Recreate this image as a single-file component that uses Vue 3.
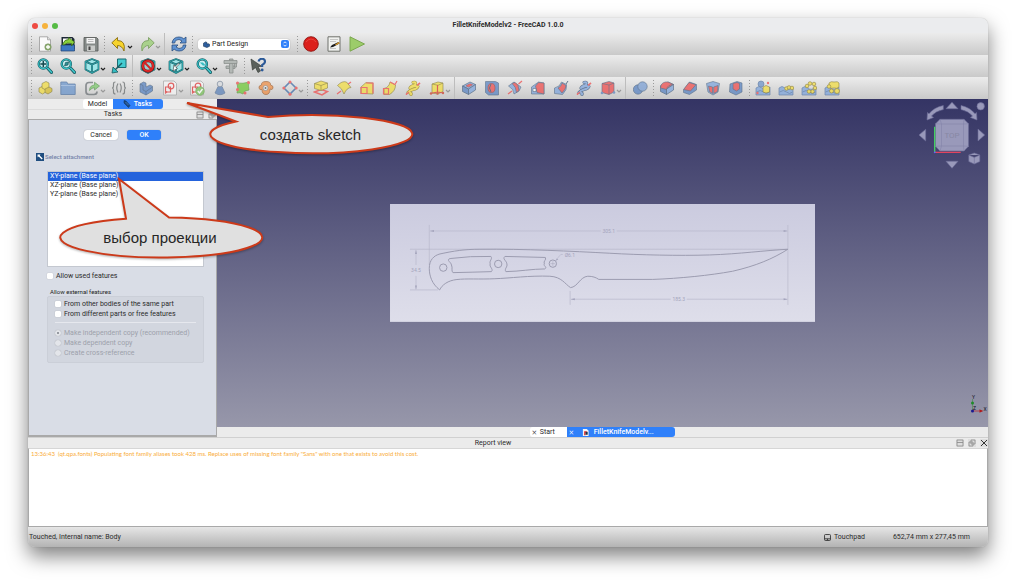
<script setup>
import { ref } from 'vue'

const cube = (top, left, right) =>
  `<g stroke-width=".7" stroke-linejoin="round"><path d="M1.500 6 9 2l5.500 2.500-7 4.500z" fill="${top}"/><path d="M1.500 6 7.500 9v5.500l-6-3z" fill="${left}"/><path d="M7.500 9l7-4.500V10l-7 4.500z" fill="${right}"/></g>`
const Y = '#f2dd45', YD = '#d9bf2e', B = '#7fa5dc', BD = '#5a84c2', R = '#ee4f4f'
const yel = (s) => `<g stroke="#6f641c" stroke-width=".6" stroke-linejoin="round">${s}</g>`
const blu = (s) => `<g stroke="#36506f" stroke-width=".6" stroke-linejoin="round">${s}</g>`
const lens = (s) =>
  `<path d="M10 9.500l4.500 4.800" stroke="#1b5a60" stroke-width="3.200" stroke-linecap="round"/><path d="M10 9.500l4.500 4.800" stroke="#3fc7cc" stroke-width="1.600" stroke-linecap="round"/><circle cx="6.300" cy="6" r="4.600" fill="#c9eef0" stroke="#1b5a60" stroke-width="2.400"/><circle cx="6.300" cy="6" r="4.600" fill="none" stroke="#35bcc2" stroke-width="1.300"/>${s}`
const tealCube = (s) =>
  `<g fill="#9fe6e8" stroke="#1b5a60" stroke-width="1.700" stroke-linejoin="round"><path d="M8 1l6.500 2.600v8L8 15l-6.500-3.400v-8z"/><path d="M1.500 3.600L8 6.400l6.500-2.800M8 6.400V15" fill="none"/></g><path d="M1.500 3.600L8 6.400l6.500-2.800M8 6.400V15M8 1l6.500 2.600v8L8 15l-6.500-3.400v-8z" fill="none" stroke="#35bcc2" stroke-width=".7"/>${s}`
const sketch =
  `<path d="M1.500 1h10.500l2.500 2.500V15h-13z" fill="#f5f5f5" stroke="#9a9a9a" stroke-width=".8"/><g fill="none" stroke="#e03a3a" stroke-width="1.200"><path d="M3.500 7h5v5h-5z"/><circle cx="9" cy="6" r="2.800"/><path d="M3 13.500l2-2"/></g>`
const land = (s) =>
  `<path d="M1 8q3-3 6 0t8-1v8H1z" fill="${B}" stroke="#4d6f9e" stroke-width=".7"/><path d="M1.500 12q4-3 7 0t6 0" stroke="#5a7db0" fill="none"/>${s}`
const dot = (x, y, r = 1.8) => `<circle cx="${x}" cy="${y}" r="${r}" fill="${Y}" stroke="#85751b" stroke-width=".7"/>`
const helix = (c, d) =>
  `<path d="M1 14.500L15 3" stroke="${R}" stroke-width="1.300"/><g fill="none" stroke-linecap="round" stroke-linejoin="round"><path d="M8 2.500q4-1 2 2.500-4 1-5 3 5-3 8-1.500-1 2.500-5 3-3.500 1-5 3 4 0 3 2" stroke="${d}" stroke-width="3"/><path d="M8 2.500q4-1 2 2.500-4 1-5 3 5-3 8-1.500-1 2.500-5 3-3.500 1-5 3 4 0 3 2" stroke="${c}" stroke-width="2"/></g><path d="M1 14.500l3-2.500M12 5.500l3-2.500" stroke="${R}" stroke-width="1.300"/>`

const art = {
  new: `<path d="M2.500 .8h8l3 3v11.400h-11z" fill="#fafafa" stroke="#999" stroke-width=".8"/><path d="M10.500 .8v3h3" fill="#ddd" stroke="#999" stroke-width=".7"/><circle cx="11" cy="11" r="3.200" fill="#8fb072" stroke="#718c5a" stroke-width=".6"/><path d="M11 9v4M9 11h4" stroke="#fff" stroke-width="1.300"/>`,
  open: `<path d="M1.500 1h11l2 2v10h-13z" fill="#1e2a36"/><path d="M3 2.500h9v5H3z" fill="#fff"/><path d="M1 9h13.500v6H1z" fill="#3e78c2" stroke="#1d3f70" stroke-width=".7"/><path d="M2.500 8.500q2-5.500 6-5V1.500L14.500 6l-3 4v-2.500Q7 6 4 9z" fill="#8bd13c" stroke="#33661b" stroke-width=".7"/>`,
  save: `<path d="M1 1.500h12.500l1.500 1.500v12H1z" fill="#858a88" stroke="#5c605e" stroke-width=".9"/><path d="M3.500 2h8.500v5.500H3.500z" fill="#f3f3f3"/><path d="M5 3.500h5.500M5 5.500h5.500" stroke="#aaa" stroke-width=".8"/><path d="M4 9.500h8V15H4z" fill="#c9cbc9"/><path d="M5.500 10.500h2v3.500h-2z" fill="#444"/>`,
  undo: `<path d="M.8 6.800L6.500 1.500v3Q15 4.500 13 15q-2-5.500-6.500-5.500v3z" fill="#f6d32d" stroke="#8a6d10" stroke-width=".9" stroke-linejoin="round"/>`,
  redo: `<path d="M15.200 6.800L9.500 1.500v3Q1 4.500 3 15q2-5.500 6.500-5.500v3z" fill="#a9d18c" stroke="#7fa266" stroke-width=".9" stroke-linejoin="round"/>`,
  refresh: `<g fill="#5f92d2" stroke="#2a4f80" stroke-width=".8" stroke-linejoin="round"><path d="M1 7q1-6 7-6 3 0 4.800 1.800L15 1v6H9l2-2Q8 2.500 5.500 4 4 5 3.700 7z"/><path d="M15 9q-1 6-7 6-3 0-4.800-1.800L1 15V9h6l-2 2q3 2.500 5.500 1 1.500-1 1.800-3z"/></g>`,
  rec: `<circle cx="8" cy="8" r="7.300" fill="#dc1f1b" stroke="#8f1411" stroke-width=".9"/><path d="M3 6q5-6 10 0" stroke="#ef6a60" stroke-width="1" fill="none" opacity=".5"/>`,
  edit: `<path d="M2 .8h12v14.400H2z" fill="#f1f2ef" stroke="#6f716c" stroke-width="1"/><path d="M4 3.500h8M4 5.500h6M4 12.500h6" stroke="#b5b5b5" stroke-width=".7"/><path d="M4 11.500l2-2.500 6.500-3 1 1.500-6.500 3.500z" fill="#1d1d1d"/><path d="M9 8.500l4-2.500.8 1.300-3.800 2z" fill="#d99a2b"/>`,
  play: `<path d="M1 .8L15.500 8 1 15.200z" fill="#9ccc6a" stroke="#77a34b" stroke-width=".9" stroke-linejoin="round"/>`,
  fitall: lens(`<path d="M6.300 3v6M3.300 6h6" stroke="#14484d" stroke-width="1.500"/>`),
  fitsel: lens(`<path d="M4.500 8l1-3.500 3-.5-.5 3z" fill="#2d8f95" stroke="#14484d" stroke-width=".6"/>`),
  cube: tealCube(''),
  align: `<path d="M6.500 1h8.500v8.500H6.500z" fill="#45ccd1" stroke="#1b6a70" stroke-width="1"/><path d="M11 5l-7 7" stroke="#1b5a60" stroke-width="1.500"/><path d="M1 15l1-6 5 5z" fill="#35bcc2" stroke="#1b5a60" stroke-width=".8"/>`,
  block: tealCube(`<circle cx="8" cy="8" r="5.200" fill="#9ccfd1" stroke="#7d1010" stroke-width="3"/><circle cx="8" cy="8" r="5.200" fill="none" stroke="#e02a2a" stroke-width="1.800"/><path d="M4.300 4.300l7.400 7.400" stroke="#d42424" stroke-width="2"/>`),
  box: tealCube(`<path d="M5 13l1-6 1 1.500L10.500 5l1 1-3.500 3.500 1.500 1z" fill="#fff" stroke="#333" stroke-width=".6"/>`),
  zoom: lens(`<path d="M3.800 4.500l3 3h3l-3-3z" fill="#35bcc2"/>`),
  caliper: `<g fill="#b3b8b5" stroke="#8c918e" stroke-width=".8"><path d="M3 8h9v2.500H3z"/><path d="M11.500 4v5h2V3z"/><path d="M6.500 1h3.500v14H6.500z"/><path d="M1 2.500h13v3H1z"/></g>`,
  whats: `<path d="M1 1l1.500 11 3-2.500 2.500 5 2.500-1.500-2.500-4.500h4z" fill="#5a605c" stroke="#3e423e" stroke-width=".7"/><path d="M8.500 3.500q.5-2.700 3.500-2.700T15 3.500q0 2-2.800 3.500v2" fill="none" stroke="#2c5a98" stroke-width="2.100"/><circle cx="12.200" cy="12" r="1.400" fill="#2c5a98"/>`,
  part: yel(`<path d="M2 8l4-2 3.500 1.500v4L5.500 14 2 12z" fill="${Y}"/><path d="M5 3.500L9 1.500l3 1.500v5l-3 2-4-2z" fill="${Y}"/><path d="M8 9l4-2 3 1.500v3L11 14l-3-1.500z" fill="${YD}"/>`),
  folder: `<path d="M.8 2h6l1 2h7.400v10.500H.8z" fill="#6b95cb" stroke="#42689b" stroke-width=".8"/><path d="M1 5.500h14" stroke="#a8c3e6" stroke-width=".7"/>`,
  link: `<path d="M9 2.500H5q-3 0-3 3v6q0 3 3 3h5q3 0 3-3" fill="none" stroke="#6e7478" stroke-width="1.700"/><path d="M5.500 10.500q0-5 5-5.500V2.300L15.500 6l-5 4V7.700Q8 7.500 5.500 10.500z" fill="#7cc96b" stroke="#4c8743" stroke-width=".7"/>`,
  braces: `<g fill="none" stroke="#6b6f70" stroke-width="1.200"><path d="M4.500 2q-2 0-2 2v2q0 2-1.500 2 1.500 0 1.500 2v2q0 2 2 2M11.500 2q2 0 2 2v2q0 2 1.500 2-1.500 0-1.500 2v2q0 2-2 2"/><path d="M7 3.500Q4.500 8 7 12.500M9 3.500q2.500 4.500 0 9"/></g>`,
  body: blu(`<path d="M2 4l3.500-2L8 3v4l4-2 2.500 1.200V11L8 15l-6-3z" fill="${BD}"/><path d="M2 4l3 1.500v4.500L8 11.500 14.500 7M8 11.500V15" fill="none"/>`),
  sketch,
  validate: sketch + `<circle cx="11" cy="11" r="4.300" fill="#7cc25e" stroke="#579a3d" stroke-width=".6"/><path d="M8.800 11l1.700 2 3-4" fill="none" stroke="#fff" stroke-width="1.400"/>`,
  check: `<path d="M6 6.500h4l3 6.500q-5 3.500-10 0z" fill="#5d83b9" stroke="#4a678f" stroke-width=".7"/><circle cx="8" cy="4" r="2.800" fill="#d7dbe0" stroke="#6b7a8f" stroke-width=".8"/>`,
  map: `<path d="M2 3q6 1 12-1-1 4 0 8l-4 1-2 3q-3-2-6-1 1.500-5 0-10z" fill="#6fc838" stroke="#4f8e2c" stroke-width=".7"/><g fill="${R}"><circle cx="2.500" cy="3" r="1.500"/><circle cx="13.500" cy="2.500" r="1.500"/><circle cx="2.500" cy="9.500" r="1.500"/><circle cx="10" cy="13" r="1.500"/></g>`,
  sheep: `<path d="M3.500 5Q3 1.500 8 1.500T12.500 5q3 .5 2.500 3t-3 1q0 5.500-4 5.500T4 9.500Q1.500 10.500 1 8t2.500-3z" fill="#ed8f48" stroke="#9b5a2c" stroke-width=".8"/><circle cx="7.500" cy="8" r="2.500" fill="#eee" stroke="#777" stroke-width=".7"/><circle cx="7.500" cy="8" r="1" fill="#555"/>`,
  datum: `<path d="M8 2L14 8 8 14 2 8z" fill="none" stroke="#426fa8" stroke-width="1.600"/><g fill="${R}"><circle cx="8" cy="1.900" r="1.500"/><circle cx="14.200" cy="8" r="1.500"/><circle cx="8" cy="14.200" r="1.500"/><circle cx="1.800" cy="8" r="1.500"/></g>`,
  pad: `<path d="M1.500 12l6.500-2.500 6.500 2L9 15z" fill="none" stroke="${R}" stroke-width="1.500"/>` + yel(`<path d="M1.500 3.500L8 1l6.500 2v5L8 10.500l-6.500-2z" fill="${Y}"/><path d="M1.500 3.500L8 5.500 14.500 3M8 5.500v5" fill="none"/>`),
  revolve: `<path d="M1 14l4-3M11 5l4-3" stroke="${R}" stroke-width="1.300"/>` + yel(`<path d="M1.500 5.500Q6 .500 10.500 2L15 7.500q-4 0-7 6.500-2-6-6.500-8.500z" fill="${Y}"/>`),
  loft: yel(`<path d="M2 7l5-4.500L14 3v11L2 13.500z" fill="${Y}"/>`) + `<path d="M2 7.500h6v6H2zM7 3l7 .200V13.500" fill="none" stroke="${R}" stroke-width="1.200"/>`,
  sweep: yel(`<path d="M2 8.500q5-1 6-6.500l5.500 3q0 6-6 9.500H2z" fill="${Y}"/>`) + `<path d="M1.500 8.500h5v5.500h-5zM8 2l5 2.500L15 1" fill="none" stroke="${R}" stroke-width="1.200"/>`,
  helix: helix(Y, '#8f7d1b'),
  prim: yel(`<path d="M3 4l6-2 5 1v8.500L9 14l-6-1z" fill="${Y}"/><path d="M3 4l6 1.300L14 3" fill="none"/>`) + `<path d="M8.500 5v8M1.500 13.500l7-1.500 6 1" fill="none" stroke="#d9382f" stroke-width="1.200"/><g fill="#c43"><circle cx="2" cy="13.500" r="1.200"/><circle cx="14" cy="13" r="1.200"/><circle cx="8.500" cy="13.500" r="1.200"/></g>`,
  pocket: blu(cube(B, BD, B)) + `<path d="M5 5.800l4-2 2.500 1-4 2.300z" fill="${R}" stroke="#933" stroke-width=".5"/>`,
  hole: blu(`<path d="M1.500 1.500h10l3 1.500v12h-10l-3-2.500z" fill="${BD}"/>`) + `<ellipse cx="7.500" cy="8" rx="3.500" ry="4.500" fill="${R}" stroke="#833" stroke-width=".6"/><path d="M7 4q-3 4 0 8" fill="none" stroke="#36506f"/>`,
  groove: `<path d="M1 14l4-3M11.500 4l3.500-3" stroke="${R}" stroke-width="1.300"/>` + blu(`<path d="M1.500 6L7 2l7 5-2 4-5 3q0-5-5.500-8z" fill="${B}"/><path d="M5 3.500q4 3 4.500 9l2.500-2Q12 4.500 8 2.500z" fill="${R}"/>`),
  subloft: blu(`<path d="M1.500 7l7-5L14 3v11H1.500z" fill="${B}"/><path d="M5.500 6L8.500 2.500 14 3v11L7 12.500z" fill="${R}"/><path d="M3 8.500h3v3H3z" fill="#fff"/>`),
  subsweep: blu(`<path d="M1.500 8Q7 7 8.500 2l5 2.500q1 5-4 10l-8-1z" fill="${B}"/><path d="M5 8q3-1 4-5l4 2.500Q13 9 9 13z" fill="${R}"/>`) + `<path d="M13 4l2-3" stroke="#36506f"/>`,
  subhelix: helix(B, '#36506f'),
  subprim: blu(`<path d="M2 3.500L9 1.500l5 1.500v9L9 14.500l-7-2z" fill="${R}"/><path d="M2 3.500l7 1.500 5-2M9 5v9.500" fill="none"/>`) + `<g fill="#5f86bf"><circle cx="2" cy="13" r="1.300"/><circle cx="14" cy="12.500" r="1.300"/></g>`,
  bool: blu(`<circle cx="6" cy="9.500" r="4.700" fill="${BD}"/><circle cx="10.500" cy="6.500" r="4.700" fill="#7ca0d4"/>`),
  fillet: blu(cube(R, BD, B) + `<path d="M1.500 8q0-5 5-6L9 2l5.500 2.500q-6 0-7 5z" fill="${R}"/>`),
  chamfer: blu(`<path d="M1.500 10l6-8L14.500 4.500V10l-7 4.500-6-2z" fill="${BD}"/><path d="M1.500 9.500L7 2.500l7 2.200L8.500 11z" fill="${R}"/>`),
  draft: blu(`<path d="M1.500 3.500L8 1.500l6.500 2L13 12l-5 3-5-3z" fill="${B}"/><path d="M3.500 6l4 1v6.500L4.500 11.500zM8.700 7l4.300-1.500-.5 6L8.700 13.500z" fill="${R}"/>`),
  thick: blu(`<path d="M2 4l7-2.500L14 3v9l-6 3-6.500-3z" fill="${BD}"/><path d="M5 3.500l4-1 2.500 1V9L8.500 11 5 9z" fill="${R}"/>`),
  mirror: land(`<circle cx="6" cy="4" r="3" fill="#6f94c9" stroke="#3f5f8f" stroke-width=".6"/>`) + yel(`<path d="M8 7l3-1.500L14.500 7v5l-3.500 1L8 12z" fill="${Y}"/>`) + `<circle cx="2.500" cy="13" r="1.200" fill="${R}"/><circle cx="13" cy="3" r="1.200" fill="${R}"/>`,
  linear: land(dot(8.5, 8.5) + dot(11, 7.5) + dot(14, 8)),
  polar: land(dot(6, 6) + dot(9, 3.5) + dot(13, 4) + dot(14, 8) + dot(11.5, 11.5) + dot(8, 11.5)),
  multi: land(yel(`<path d="M5 3q2-2 5-1 4-1 5 1v4q-2 2-5 1Q6 9 5 7z" fill="${Y}"/>`) + dot(5, 6.5) + dot(7.5, 11, 2) + dot(13, 11, 2.5)),
}

const bars = [
  ['|', 'new', 'open', 'save', '|', 'undo+', 'redo+', '/', 'refresh', '|', 'WORKBENCH', '|', 'rec', 'edit', 'play'],
  ['|', 'fitall', 'fitsel', 'cube+', 'align', '/', 'block+', 'box+', 'zoom+', 'caliper', '|', 'whats'],
  ['|', 'part', 'folder', 'link+', 'braces', '|', 'body', 'sketch+', 'validate', 'check', 'map', 'sheep', 'datum+', '|',
    'pad', 'revolve', 'loft', 'sweep', 'helix', 'prim+', '/', 'pocket', 'hole', 'groove', 'subloft', 'subsweep', 'subhelix', 'subprim+', '/',
    'bool', '|', 'fillet', 'chamfer', 'draft', 'thick', '|', 'mirror', 'linear', 'polar', 'multi'],
]
const nameOf = (t) => t.replace('+', '')

const planes = ['XY-plane (Base plane)', 'XZ-plane (Base plane)', 'YZ-plane (Base plane)']
const selected = ref(0)
</script>

<template>
  <div class="page">
    <main class="window">
      <header class="titlebar">
        <div class="lights"><i class="red"></i><i class="amber"></i><i class="green"></i></div>
        <h1>FilletKnifeModelv2 - FreeCAD 1.0.0</h1>
      </header>

      <div v-for="(bar, b) in bars" :key="b" class="toolbar" :class="{ muted: b === 2 }" role="toolbar">
        <template v-for="(t, i) in bar" :key="i">
          <span v-if="t === '|'" class="handle"></span>
          <span v-else-if="t === '/'" class="divider"></span>
          <span v-else-if="t === 'WORKBENCH'" class="workbench">
            <svg class="wb-icon" viewBox="0 0 16 16"><path d="M1 5l5-3 3 1.500V7l3-1 3 1.500V12l-6 3-8-3z" fill="#2d5e9e" stroke="#14304f" stroke-width="1.300" /></svg>
            <select aria-label="Workbench"><option>Part Design</option></select>
            <svg class="wb-arrows" viewBox="0 0 16 16"><rect width="16" height="16" rx="4" fill="#2f80fa" /><path d="M5 6.500l3-3 3 3M5 9.500l3 3 3-3" fill="none" stroke="#fff" stroke-width="1.800" /></svg>
          </span>
          <button v-else class="tool" :class="{ drop: t.endsWith('+'), faded: nameOf(t) === 'redo' }" :aria-label="nameOf(t)">
            <svg class="glyph" viewBox="0 0 16 16" v-html="art[nameOf(t)]"></svg>
            <svg v-if="t.endsWith('+')" class="caret" viewBox="0 0 6 6"><path d="M1 2l2 2 2-2" fill="none" stroke="currentColor" stroke-width="1.200" /></svg>
          </button>
        </template>
      </div>

      <section class="work">
        <aside class="dock">
          <div class="dock-tabs">
            <button class="tab">Model</button>
            <button class="tab active">
              <svg viewBox="0 0 16 16"><path d="M2 1l4 1 8 9-3 4-9-9z" fill="#1b4b86" stroke="#102c4e" /><path d="M5 4l6 6" stroke="#6fa0d8" /></svg>Tasks
            </button>
          </div>
          <div class="dock-title">
            <h2>Tasks</h2>
            <button class="mini" aria-label="Dock"><svg viewBox="0 0 8 8"><path d="M1 1h6v6H1zM1 3.500h6" /></svg></button>
            <button class="mini" aria-label="Float"><svg viewBox="0 0 8 8"><path d="M3 1h4v4H3zM1 3h4v4H1z" /></svg></button>
          </div>
          <div class="panel">
            <div class="actions">
              <button class="push">Cancel</button>
              <button class="push primary">OK</button>
            </div>
            <h3 class="section">
              <svg viewBox="0 0 8 8"><rect width="8" height="8" fill="#1f4d80" /><path d="M1.500 1.500h3L3.700 2.500l3 3-1 1-3-3-1 .8z" fill="#fff" /></svg>
              Select attachment
            </h3>
            <ul class="planes" role="listbox" aria-label="Planes">
              <li v-for="(p, i) in planes" :key="p">
                <button role="option" :aria-selected="i === selected" :class="{ on: i === selected }" @click="selected = i">{{ p }}</button>
              </li>
            </ul>
            <label class="opt used"><input type="checkbox" />Allow used features</label>
            <fieldset>
              <legend>Allow external features</legend>
              <div class="group">
                <label class="opt"><input type="checkbox" />From other bodies of the same part</label>
                <label class="opt"><input type="checkbox" />From different parts or free features</label>
                <hr />
                <label class="opt radio"><input type="radio" name="copy" checked disabled />Make independent copy (recommended)</label>
                <label class="opt radio"><input type="radio" name="copy" disabled />Make dependent copy</label>
                <label class="opt radio"><input type="radio" name="copy" disabled />Create cross-reference</label>
              </div>
            </fieldset>
          </div>
        </aside>

        <div class="stage">
          <div class="viewport">
            <svg class="drawing" viewBox="0 0 426 118">
              <defs>
                <linearGradient id="sheet" x1="0" y1="0" x2="0" y2="1">
                  <stop offset="0" stop-color="#cbcbdf" /><stop offset="1" stop-color="#dedeea" />
                </linearGradient>
              </defs>
              <rect width="426" height="118" fill="url(#sheet)" />
              <g class="dims">
                <path d="M39.300 21v40M398.300 21v80M180.300 87v14M20 45.300h378M20 86h28M26 46v15M26 72v13.500M40 27h171M227 27h171M181 95.300h100M297 95.300h101M167 55l4-4.500h2" />
                <path class="tip" d="M40 27l4-1v2zM398 27l-4-1v2zM181 95.300l4-1v2zM398 95.300l-4-1v2zM26 46l-1 4h2zM26 85.500l-1-4h2zM165.500 57l3-1.500-1.500-1z" />
                <text x="219" y="29">305.1</text><text x="289" y="97">185.3</text>
                <text x="26" y="68">34.5</text><text x="180" y="53">Ø6.1</text>
              </g>
              <g class="knife">
                <path d="M39.300 64.300C39.300 56 44 51.500 50 50 64 47 74 45.300 90 45.300 134 44.800 182 47.300 220 49.300 250 51 290 52 320 51 350 50 375 46.500 398.300 45.300 383 55 366 62 343 67.300 320 71.500 290 74.500 263 75.500H209C206 73.500 203 72.300 198 72.300 190 73 188 83 180.700 83.700 175 80 172 73 160 72.300 140 71.500 120 74.300 105 74.800 90 75.500 76 74.500 67 75.600 58 76.500 52 81 49.700 86 42 80 39.300 72 39.300 64.300z" />
                <circle cx="53.300" cy="63.700" r="3.700" /><circle cx="108.300" cy="60" r="3.700" /><circle cx="163" cy="59.700" r="3.700" />
                <path d="M61 54.500Q80 52 101 52.500C103 55 99 57 100.300 60 99 63 104 65 101.500 67.700Q82 68.300 63 68.700C61 67 63 64 61.500 61 61 58 57 57 59 55zM115 52.500L155.500 53.500C157 56 153 57 154.500 60 153 62 158 63 155 65 142 65 130 67.500 116 67.700 114 65 118 63 117 60 117 57 112 55 115 52.500z" />
                <path d="M160.500 59.700h5M163 57.200v5" stroke-width=".4" />
              </g>
            </svg>

            <svg class="navcube" viewBox="0 0 72 72">
              <g fill="#9999ba" stroke="#6d6d98" stroke-width=".6" stroke-linejoin="round">
                <path d="M36 3.300l6 6.400H30zM3 36l6.700-5.700v11.700zM68.700 36L62 30v12zM36 69.300l-6-7h12z" />
                <path d="M27.300 6.500v4Q19.500 12 15.500 17l2 1.500-6.500 2.500 .5-7.500 1.500 1.300Q18 8.500 27.300 6.500zM45 6.500v4Q52.500 12 56.500 17l-2 1.500 6.500 2.500-.5-7.500-1.500 1.300Q54 8.500 45 6.500z" />
                <circle cx="64.700" cy="7.300" r="3.700" />
                <path d="M58.300 54l5.500 2v6.500L58.300 65l-5.500-2.500V56zM52.800 56l5.500 2.500 5.500-2.500M58.300 58.500V65" />
                <path d="M24 20.300h24l4.500 4.500v22.500L48 52H24l-4.500-4.700V24.800z" />
                <path d="M25.500 25h22v22h-22zM24 20.300l1.500 4.700-6-.2M48 20.300L47.500 25l5-.2M24 52l1.500-5-6 .3M48 52l-.5-5 5 .3" fill="none" stroke="#8383aa" />
              </g>
              <path d="M18.700 27.700V53" stroke="#46df62" stroke-width="1.200" /><path d="M18.700 53.300h26" stroke="#e2445f" stroke-width="1.200" />
              <circle cx="18.700" cy="53.300" r=".9" fill="#5566ff" />
              <text x="36" y="39" text-anchor="middle" font-size="8" fill="#8888a4">TOP</text>
            </svg>

            <svg class="axes" viewBox="0 0 20 24">
              <path d="M4.500 6v12" stroke="#4f8f58" stroke-width=".7" /><path d="M4.500 18h10" stroke="#b8303a" stroke-width=".8" />
              <circle cx="4.500" cy="10" r="1.500" fill="#1f8a2a" /><path d="M11.500 16.300l3.500 1.700-3.500 1.700z" fill="#b01a1a" /><circle cx="4.500" cy="18" r="1.500" fill="#181890" />
              <g font-size="5" fill="#15151f"><text x="4" y="6">Y</text><text x="15.500" y="17.500">X</text><text x="5" y="17">Z</text></g>
            </svg>
          </div>
          <nav class="doc-tabs">
            <button class="doc"><span class="x">×</span>Start</button>
            <button class="doc active">
              <span class="x">×</span>
              <svg viewBox="0 0 8 8"><path d="M1 0h4.500L7.500 2v6H1z" fill="#f6f6f6" /><path d="M2.500 2.500h3V4H4v3H2.500z" fill="#d22" /><path d="M4 3.500L6.500 3v3.500H4z" fill="#234" /></svg>
              FilletKnifeModelv...
            </button>
          </nav>
        </div>
      </section>

      <section class="report">
        <div class="report-head">
          <h2>Report view</h2>
          <button class="mini" aria-label="Dock report"><svg viewBox="0 0 8 8"><path d="M1 1h6v6H1zM1 3.500h6" /></svg></button>
          <button class="mini" aria-label="Float report"><svg viewBox="0 0 8 8"><path d="M3 1h4v4H3zM1 3h4v4H1z" /></svg></button>
          <button class="mini close" aria-label="Close report"><svg viewBox="0 0 8 8"><path d="M1 1l6 6M7 1L1 7" /></svg></button>
        </div>
        <p class="log">13:36:43&nbsp; (qt.qpa.fonts) Populating font family aliases took 428 ms. Replace uses of missing font family "Sans" with one that exists to avoid this cost.</p>
      </section>

      <footer class="status">
        <span class="msg">Touched, Internal name: Body</span>
        <button class="nav-style"><svg viewBox="0 0 8 8"><rect x=".6" y=".6" width="6.800" height="6.800" rx="1" /><path d="M.6 5.500h6.800M4 5.500v1.500" /></svg>Touchpad</button>
        <span class="size">652,74 mm x 277,45 mm</span>
      </footer>
    </main>

    <div class="callout first">
      <svg viewBox="0 0 230 58"><path d="M3 3L84 17A101 19 0 1 1 52 21.500z" /></svg>
      <span>создать sketch</span>
    </div>
    <div class="callout second">
      <svg viewBox="0 0 206 84"><path d="M62 4L112 42.500A101 20 0 1 1 69 43.700z" /></svg>
      <span>выбор проекции</span>
    </div>
  </div>
</template>

<style>
html, body { margin: 0; background: #fff; }
</style>

<style scoped>
* { box-sizing: border-box; }
.page {
  position: relative; display: flex; min-height: 100vh; padding: 18px 28px 37px; overflow: hidden;
  font: 7px/9px Roboto, "Liberation Sans", sans-serif; color: #2b2b2b;
}
h1, h2, h3, p, ul, fieldset { margin: 0; padding: 0; font: inherit; }
button { margin: 0; padding: 0; border: 0; background: none; font: inherit; color: inherit; }
.window {
  flex: 1; min-width: 0; display: flex; flex-direction: column; border-radius: 7px; overflow: hidden;
  background: #ebebeb; box-shadow: 0 0 1px rgba(0,0,0,.3), 0 9px 20px rgba(0,0,0,.5);
}
.titlebar { position: relative; display: flex; align-items: center; height: 15px; background: #ebecee; }
.titlebar h1 { flex: 1; text-align: center; font-weight: 700; font-size: 7px; }
.lights { position: absolute; left: 4px; display: flex; gap: 4px; }
.lights i { width: 6px; height: 6px; border-radius: 50%; }
.red { background: #ee4b43; } .amber { background: #f6b23c; } .green { background: #55bb45; }

.toolbar {
  display: flex; align-items: center; height: 22px; padding-left: 1px;
  background: linear-gradient(#ececec, #c9c9c9);
}
.handle { width: 4px; height: 16px; display: flex; justify-content: center; }
.handle::before { content: ""; width: 1px; background: repeating-linear-gradient(#9a9a9a 0 1px, transparent 1px 3px); }
.divider { width: 5px; height: 22px; display: flex; justify-content: center; }
.divider::before { content: ""; width: 1px; background: #bdbdbd; }
.tool { width: 23px; height: 20px; display: flex; align-items: center; justify-content: center; flex: none; }
.tool.drop { width: 28px; padding-left: 5px; justify-content: flex-start; }
.glyph { width: 16px; height: 16px; flex: none; }
.caret { width: 6px; height: 6px; margin-top: 6px; color: #222; }
.muted .glyph { opacity: .75; }
.muted .caret, .faded .caret { color: #999; }
.workbench { position: relative; width: 92px; margin: 0 5px 0 4px; display: flex; align-items: center; }
.workbench select {
  appearance: none; width: 100%; height: 11px; padding: 0 12px 0 14px; border: 0; border-radius: 3px;
  background: #fff; font: inherit; color: #222; box-shadow: 0 0 1px rgba(0,0,0,.4);
}
.wb-icon { position: absolute; left: 5px; width: 7px; height: 7px; }
.wb-arrows { position: absolute; right: 1px; width: 8px; height: 8px; }

.work { flex: 1; min-height: 0; display: flex; }
.dock { width: 189px; flex: none; display: flex; flex-direction: column; }
.dock-tabs { display: flex; justify-content: center; height: 10px; background: #ececec; }
.tab { width: 30px; background: #fff; border-radius: 3px 0 0 3px; }
.tab.active { width: 50px; background: #2f80fa; color: #fff; border-radius: 0 3px 3px 0; display: flex; align-items: center; justify-content: center; gap: 3px; font-weight: 500; }
.tab svg { width: 8px; height: 8px; }
.dock-title, .report-head { display: flex; align-items: center; height: 10px; gap: 4px; padding-left: 6px; }
.dock-title h2, .report-head h2 { flex: 1; text-align: center; }
.dock-title { border-top: 1px solid #dcdcdc; padding-right: 1px; }
.mini { width: 8px; height: 8px; display: flex; background: #dedede; }
.mini svg { width: 8px; height: 8px; fill: none; stroke: #888; stroke-width: .8; }
.mini.close svg { stroke: #333; stroke-width: 1; }
.panel { flex: 1; padding: 10px 12px 0 7px; background: #d9dde6; border: solid #a9a9a9; border-width: 1px 1px 2px; }
.actions { display: flex; justify-content: center; gap: 9px; padding-left: 5px; }
.push { width: 34px; height: 10px; border-radius: 3px; background: #fff; box-shadow: 0 0 1px rgba(0,0,0,.4); }
.push.primary { background: #2f80fa; color: #fff; font-weight: 500; }
.section { display: flex; align-items: center; gap: 1px; height: 9px; margin-top: 12px; font-size: 6px; font-weight: 500; color: #7482a8; }
.section svg { width: 8px; height: 8px; }
.planes { list-style: none; height: 96px; margin: 10px 0 0 11px; background: #fff; border: 1px solid #c4c8d0; }
.planes li { display: flex; }
.planes button { flex: 1; text-align: left; padding-left: 2px; height: 9px; }
.planes button.on { background: #2463dc; color: #fff; }
.opt { display: flex; align-items: center; gap: 3px; height: 10px; white-space: nowrap; }
.opt input { appearance: none; flex: none; margin: 0; width: 6px; height: 6px; border-radius: 1px; background: #fff; box-shadow: 0 0 1px rgba(0,0,0,.3); }
.opt.used { margin: 4px 0 0 11px; }
fieldset { border: 0; margin: 7px 0 0 11px; min-width: 0; }
legend { padding: 0 3px; font-size: 6px; line-height: 8px; color: #222; }
.group { padding: 2px 7px 4px; background: #d2d6df; border: 1px solid #cbcfd8; border-radius: 2px; }
.group hr { margin: 3px 0 5px; border: 0; border-top: 1px solid #e6e8ee; }
.opt.radio { color: #9da1ab; }
.opt.radio input { border-radius: 50%; background: #e3e5ea; display: grid; place-items: center; }
.opt.radio input:checked::after { content: ""; width: 2px; height: 2px; border-radius: 50%; background: #7d8088; }

.stage { flex: 1; min-width: 0; display: flex; flex-direction: column; }
.viewport {
  position: relative; flex: 1; display: flex; align-items: center; justify-content: center;
  background: linear-gradient(#343464, #9797aa);
}
.drawing { width: 55.2%; }
.dims path { fill: none; stroke: #b4b4c8; stroke-width: .6; }
.dims .tip { fill: #a4a4bc; stroke: none; }
.dims text { font-size: 5px; fill: #a4a4bc; text-anchor: middle; }
.knife { fill: none; stroke: #9c9cb0; stroke-width: 1; }
.navcube { position: absolute; top: 0; right: 0; width: 72px; height: 72px; }
.axes { position: absolute; right: 0; bottom: 10px; width: 20px; height: 24px; }
.doc-tabs { display: flex; justify-content: center; height: 10px; background: #ebebeb; }
.doc { width: 37px; display: flex; align-items: center; gap: 3px; padding-left: 2px; background: #fff; border-radius: 3px 0 0 3px; }
.doc.active { width: 108px; gap: 5px; background: #2f80fa; color: #fff; border-radius: 0 3px 3px 0; font-weight: 500; }
.doc svg { width: 7px; height: 7px; margin-left: 3px; }
.x { font-size: 9px; font-weight: 300; }

.report { height: 90px; display: flex; flex-direction: column; border-top: 1px solid #d0d0d0; }
.log { flex: 1; padding: 0 2px; background: #fff; border: 1px solid #a9a9a9; border-top-color: #d6d6d6; color: #f9ac38; font: 6px/9px Lato, "Liberation Sans", sans-serif; }
.status { display: flex; align-items: center; height: 20px; padding: 0 18px 0 1px; background: linear-gradient(#e6e6e6, #b3b3b3); }
.msg { flex: 1; }
.nav-style { display: flex; align-items: center; gap: 3px; margin-right: 28px; }
.nav-style svg { width: 7px; height: 7px; fill: none; stroke: #333; stroke-width: 1; }

.callout { position: absolute; display: flex; justify-content: center; font: 15px/18px "Liberation Sans", Arial, sans-serif; color: #262626; }
.callout svg { position: absolute; inset: 0; width: 100%; height: 100%; overflow: visible; filter: drop-shadow(0 1px 1px rgba(0,0,0,.3)); }
.callout path { fill: #e0e0e0; stroke: #cc3a1a; stroke-width: 2; stroke-linejoin: miter; }
.callout span { position: relative; }
.callout.first { left: 184px; top: 100px; width: 230px; height: 58px; padding: 26px 0 0 23px; }
.callout.second { left: 57px; top: 175px; width: 206px; height: 84px; padding-top: 54px; }
</style>
